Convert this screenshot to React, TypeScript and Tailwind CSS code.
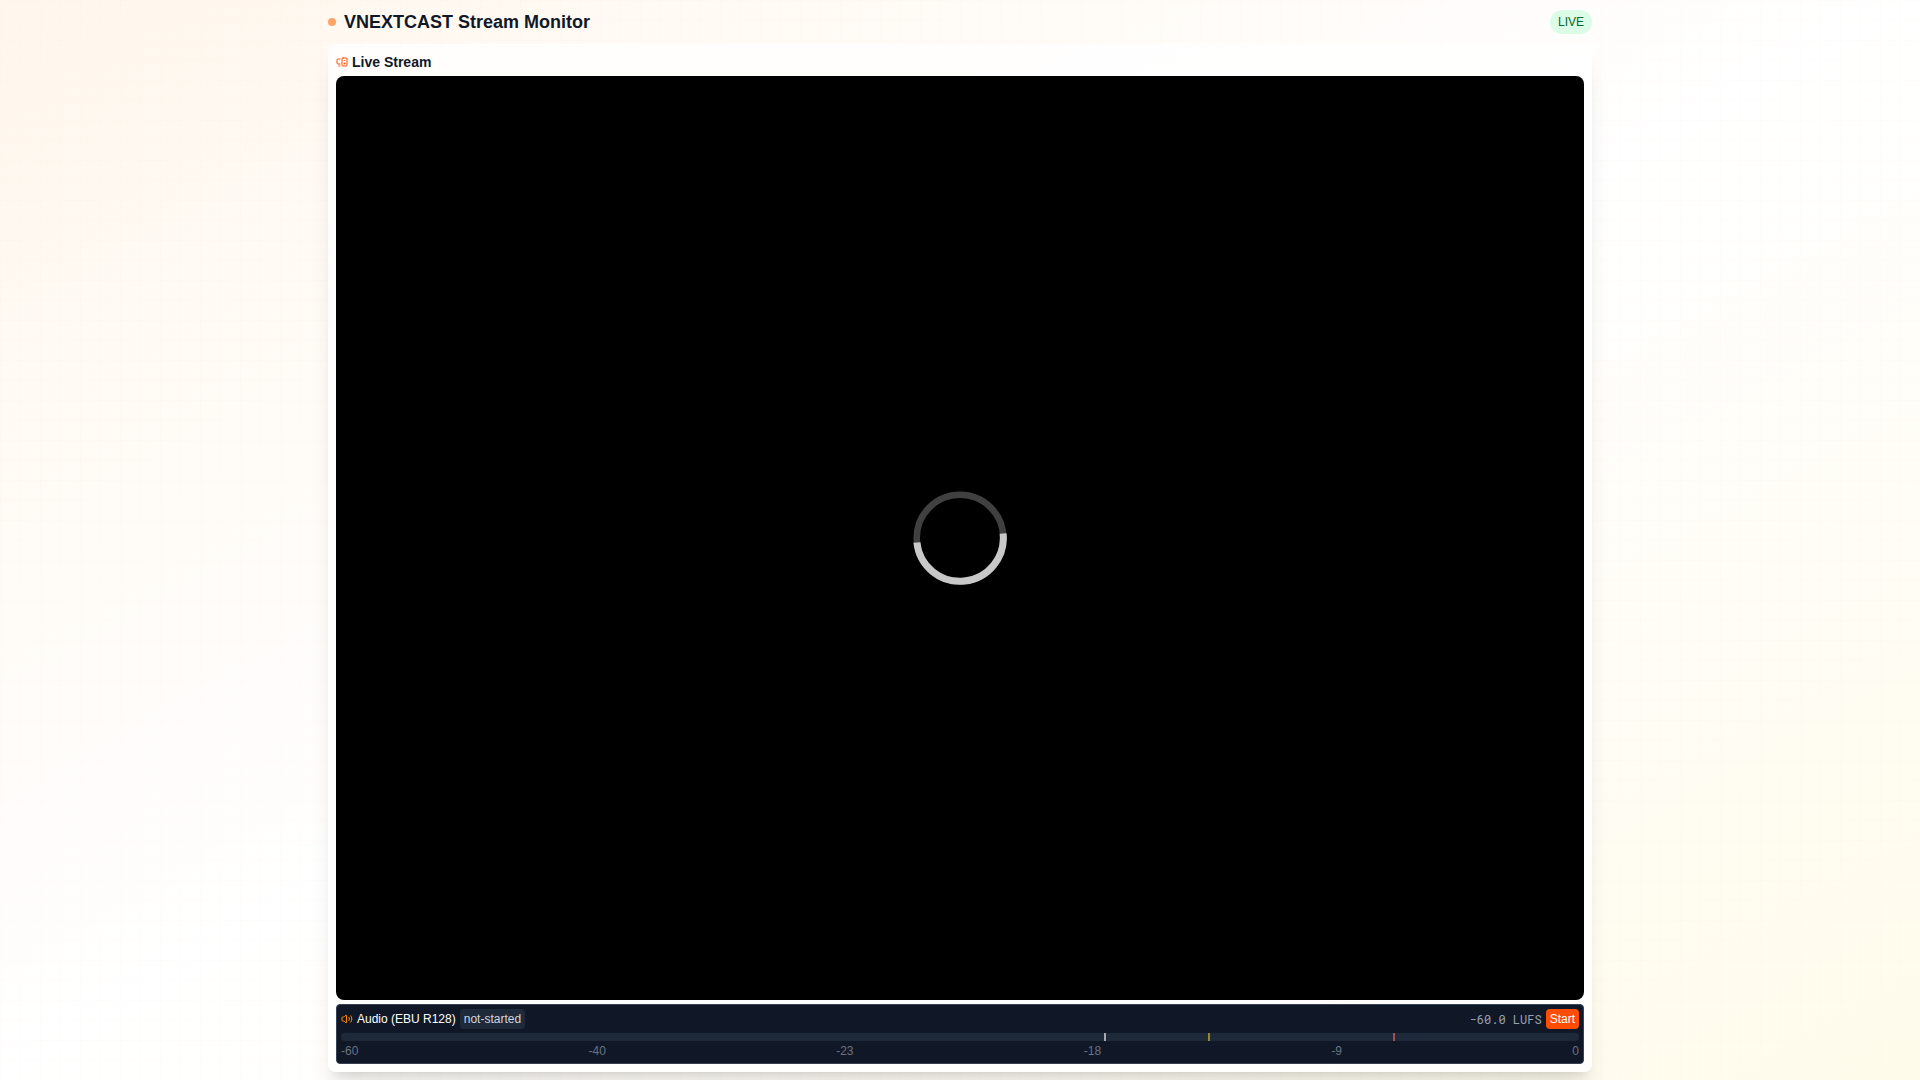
import React from 'react';
import { MonitorSpeaker, Volume2 } from 'lucide-react';

const grid =
  'bg-[linear-gradient(rgba(255,77,0,0.01)_1px,transparent_1px),linear-gradient(90deg,rgba(255,77,0,0.01)_1px,transparent_1px)] bg-[size:20px_20px]';

const scaleLabels = ['-60', '-40', '-23', '-18', '-9', '0'];

function Spinner() {
  return (
    <svg viewBox="0 0 94 94" className="h-[94px] w-[94px]" fill="none" role="img" aria-label="Loading">
      <circle cx="47" cy="47" r="43.300" stroke="#404040" strokeWidth="6.500" />
      <path d="M90.100 42.500A43.300 43.300 0 1 1 3.900 51.500" stroke="#c8c8c8" strokeWidth="7" />
    </svg>
  );
}

function AudioMeter() {
  return (
    <section className="mt-1 rounded-sm border border-gray-700 bg-gray-900 p-1 text-xs">
      <div className="mb-1 flex items-center justify-between">
        <div className="flex items-center gap-1">
          <Volume2 className="h-3 w-3 text-[#ff8c00]" aria-hidden="true" />
          <h3 className="text-white">Audio (EBU R128)</h3>
          <span className="rounded-sm bg-gray-800 px-1 py-0.5 text-gray-300">not-started</span>
        </div>
        <div className="flex items-center gap-1">
          <span className="font-['Roboto_Mono','Liberation_Mono',monospace] text-gray-400">-60.0 LUFS</span>
          <button className="rounded-sm bg-[#ff4d00] px-1 py-0.5 text-white">Start</button>
        </div>
      </div>
      <div className="relative h-2 overflow-hidden rounded-sm bg-gray-800">
        {/* -23, -18 and -9 LUFS marks */}
        <div className="absolute inset-y-0 left-[61.670%] w-0.5 bg-white opacity-60" />
        <div className="absolute inset-y-0 left-[70%] w-0.5 bg-[#e8c91e] opacity-60" />
        <div className="absolute inset-y-0 left-[85%] w-0.5 bg-red-400 opacity-60" />
      </div>
      <div className="mt-0.5 flex justify-between text-gray-500">
        {scaleLabels.map((label) => (
          <span key={label}>{label}</span>
        ))}
      </div>
    </section>
  );
}

export default function App() {
  return (
    <div className="min-h-screen bg-gradient-to-br from-orange-50 via-white to-amber-50 font-['Liberation_Sans',sans-serif]">
      <div className={grid}>
        <div className="mx-auto flex min-h-screen max-w-7xl flex-col p-2">
          <header className="mb-2 flex items-center justify-between">
            <div className="flex items-center gap-2">
              <span className="h-2 w-2 rounded-full bg-[#ffa366]" />
              <h1 className="text-lg font-bold text-gray-900">VNEXTCAST Stream Monitor</h1>
            </div>
            <span className="rounded-full bg-green-100 px-2 py-1 text-xs text-green-800">LIVE</span>
          </header>
          <main className="flex flex-1 flex-col rounded-lg bg-white/80 p-2 shadow-xl">
            <div className="mb-1 flex items-center gap-1">
              <MonitorSpeaker className="h-3 w-3 text-[#ff4d00]" aria-hidden="true" />
              <h2 className="text-sm font-semibold text-gray-900">Live Stream</h2>
            </div>
            <div className="flex flex-1 items-center justify-center rounded-lg bg-black">
              <Spinner />
            </div>
            <AudioMeter />
          </main>
        </div>
      </div>
    </div>
  );
}
